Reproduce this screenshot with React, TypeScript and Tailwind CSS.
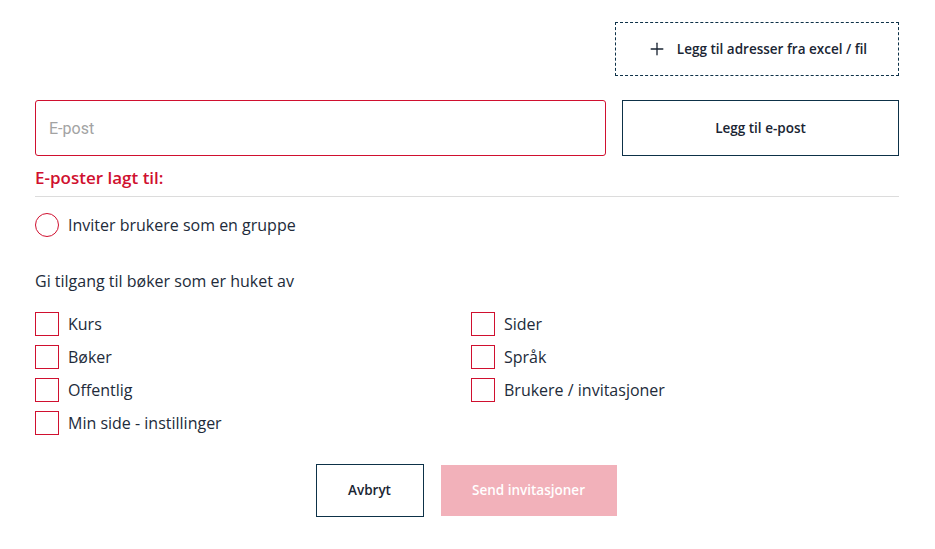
import { Plus } from 'lucide-react';

const left = ['Kurs', 'Bøker', 'Offentlig', 'Min side - instillinger'];
const right = ['Sider', 'Språk', 'Brukere / invitasjoner'];

function Check({ label }: { label: string }) {
  return (
    <label className="flex h-[24px] items-center gap-[9px]">
      <span className="h-[24px] w-[24px] shrink-0 border border-[#d0102f] bg-white" />
      <span className="text-[16px] text-[#222b3a]">{label}</span>
    </label>
  );
}

export default function App() {
  return (
    <div className="min-h-[549px] bg-white font-['Open_Sans',sans-serif]">
      <div className="ml-[35px] w-[864px] pt-[22px]">
        <div className="flex justify-end">
          <button className="flex h-[54px] w-[284px] items-center justify-center gap-[10px] border border-dashed border-[#0d3148] text-[13.5px] font-semibold text-[#1a2533]">
            <Plus size={20} strokeWidth={1.6} className="text-[#1a2533]" />
            Legg til adresser fra excel / fil
          </button>
        </div>

        <div className="mt-[24px] flex gap-[16px]">
          <input
            placeholder="E-post"
            className="h-[56px] w-[571px] rounded-[3px] border border-[#d0102f] px-[13px] font-['Roboto',sans-serif] text-[16px] text-[#333] outline-none placeholder:text-[#a3a3a3]"
          />
          <button className="h-[56px] w-[277px] border-[1.5px] border-[#0d3148] text-[13.5px] font-semibold text-[#1a2533]">
            Legg til e-post
          </button>
        </div>

        <h3 className="mt-[9px] text-[17px] leading-[26px] font-semibold text-[#d0102f]">E-poster lagt til:</h3>
        <div className="mt-[5px] h-px bg-[#dcdcdc]" />

        <label className="mt-[16px] flex h-[24px] items-center gap-[9px]">
          <span className="h-[24px] w-[24px] rounded-full border border-[#d0102f]" />
          <span className="text-[16px] text-[#222b3a]">Inviter brukere som en gruppe</span>
        </label>

        <p className="mt-[33px] text-[16px] leading-[22px] text-[#222b3a]">Gi tilgang til bøker som er huket av</p>

        <div className="mt-[20px] grid grid-cols-[436px_1fr]">
          <div className="flex flex-col gap-[9px]">
            {left.map((l) => (
              <Check key={l} label={l} />
            ))}
          </div>
          <div className="flex flex-col gap-[9px]">
            {right.map((l) => (
              <Check key={l} label={l} />
            ))}
          </div>
        </div>

        <div className="mt-[29px] flex items-center justify-center gap-[17px] pr-[2px]">
          <button className="h-[53px] w-[108px] border-[1.5px] border-[#0d3148] text-[13.5px] font-semibold text-[#1a2533]">
            Avbryt
          </button>
          <button className="h-[51px] w-[176px] bg-[#f2b1ba] text-[13.5px] font-semibold text-white">
            Send invitasjoner
          </button>
        </div>
      </div>
    </div>
  );
}
